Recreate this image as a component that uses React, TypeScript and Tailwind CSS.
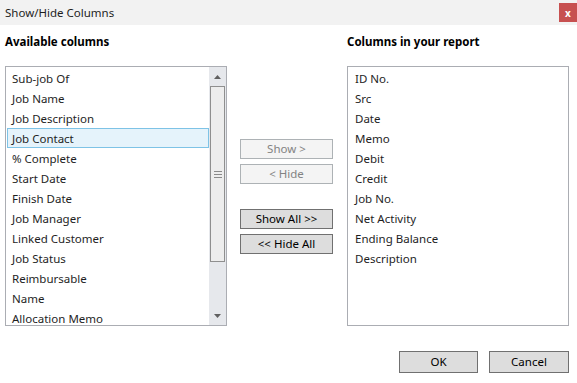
import React from "react";

const left = [
  "Sub-job Of",
  "Job Name",
  "Job Description",
  "Job Contact",
  "% Complete",
  "Start Date",
  "Finish Date",
  "Job Manager",
  "Linked Customer",
  "Job Status",
  "Reimbursable",
  "Name",
  "Allocation Memo",
];
const right = [
  "ID No.",
  "Src",
  "Date",
  "Memo",
  "Debit",
  "Credit",
  "Job No.",
  "Net Activity",
  "Ending Balance",
  "Description",
];

const font = { fontFamily: '"Noto Sans", "Open Sans", sans-serif' };

function Btn({ label, disabled, className = "" }: { label: string; disabled?: boolean; className?: string }) {
  return (
    <div
      className={
        "flex items-center justify-center border text-[11.5px] leading-none " +
        (disabled
          ? "bg-[#f4f4f4] border-[#adb2b5] text-[#838383] "
          : "bg-[#dddddd] border-[#707070] text-black ") +
        className
      }
    >
      {label}
    </div>
  );
}

export default function App() {
  return (
    <div className="w-[577px] h-[383px] bg-white flex flex-col text-[#1e1e1e]" style={font}>
      <div className="h-[25px] bg-[#f2f2f2] flex items-center justify-between pl-[5px]">
        <span className="text-[11.5px] text-[#1e1e1e]">Show/Hide Columns</span>
        <div className="w-[18px] h-[19px] bg-[#c75050] flex items-center justify-center text-white text-[10px] font-bold leading-none self-start mt-[3px]">
          x
        </div>
      </div>
      <div className="flex pl-[5px] pt-[9px]">
        <div className="w-[222px] flex flex-col">
          <div className="h-[16px] text-[11.5px] font-bold leading-[16px] text-black">Available columns</div>
          <div className="mt-[16px] h-[260px] border border-[#abadb3] flex">
            <div className="flex-1 flex flex-col pt-[1px] pl-[1px] overflow-hidden">
              {left.map((t, i) => (
                <div
                  key={t}
                  className={
                    "h-[20px] shrink-0 flex items-center pl-[4px] pt-[2px] text-[11.5px] border " +
                    (i === 3 ? "bg-[#e5f3fb] border-[#7ec3e6]" : "border-transparent")
                  }
                >
                  {t}
                </div>
              ))}
            </div>
            <div className="w-[17px] bg-[#e6e8ec] flex flex-col items-center">
              <div className="h-[19px] flex items-center justify-center">
                <svg width="7" height="4" viewBox="0 0 7 4"><path d="M0 4 L3.5 0 L7 4 Z" fill="#606060" /></svg>
              </div>
              <div className="w-[15px] h-[176px] border border-[#8f8f8f] bg-[#ededed] flex items-center justify-center">
                <svg width="8" height="7" viewBox="0 0 8 7">
                  <path d="M0 0.5 H8 M0 3.5 H8 M0 6.5 H8" stroke="#8a8a8a" strokeWidth="1" />
                </svg>
              </div>
              <div className="flex-1" />
              <div className="h-[19px] flex items-center justify-center">
                <svg width="7" height="4" viewBox="0 0 7 4"><path d="M0 0 L3.5 4 L7 0 Z" fill="#606060" /></svg>
              </div>
            </div>
          </div>
        </div>
        <div className="w-[93px] ml-[13px] flex flex-col pt-[105px]">
          <Btn label="Show >" disabled className="h-[20px]" />
          <Btn label="< Hide" disabled className="h-[20px] mt-[5px]" />
          <Btn label="Show All >>" className="h-[20px] mt-[25px]" />
          <Btn label="<< Hide All" className="h-[20px] mt-[5px]" />
        </div>
        <div className="w-[222px] ml-[14px] flex flex-col">
          <div className="h-[16px] text-[11.5px] font-bold leading-[16px] text-black">Columns in your report</div>
          <div className="mt-[16px] h-[260px] border border-[#abadb3] flex flex-col pt-[1px] pl-[1px]">
            {right.map((t) => (
              <div key={t} className="h-[20px] shrink-0 flex items-center pl-[5px] pt-[2px] text-[11.5px] border border-transparent">
                {t}
              </div>
            ))}
          </div>
        </div>
      </div>
      <div className="flex justify-end gap-[11px] pr-[8px] mt-[25px]">
        <Btn label="OK" className="w-[79px] h-[22px]" />
        <Btn label="Cancel" className="w-[80px] h-[22px]" />
      </div>
    </div>
  );
}
